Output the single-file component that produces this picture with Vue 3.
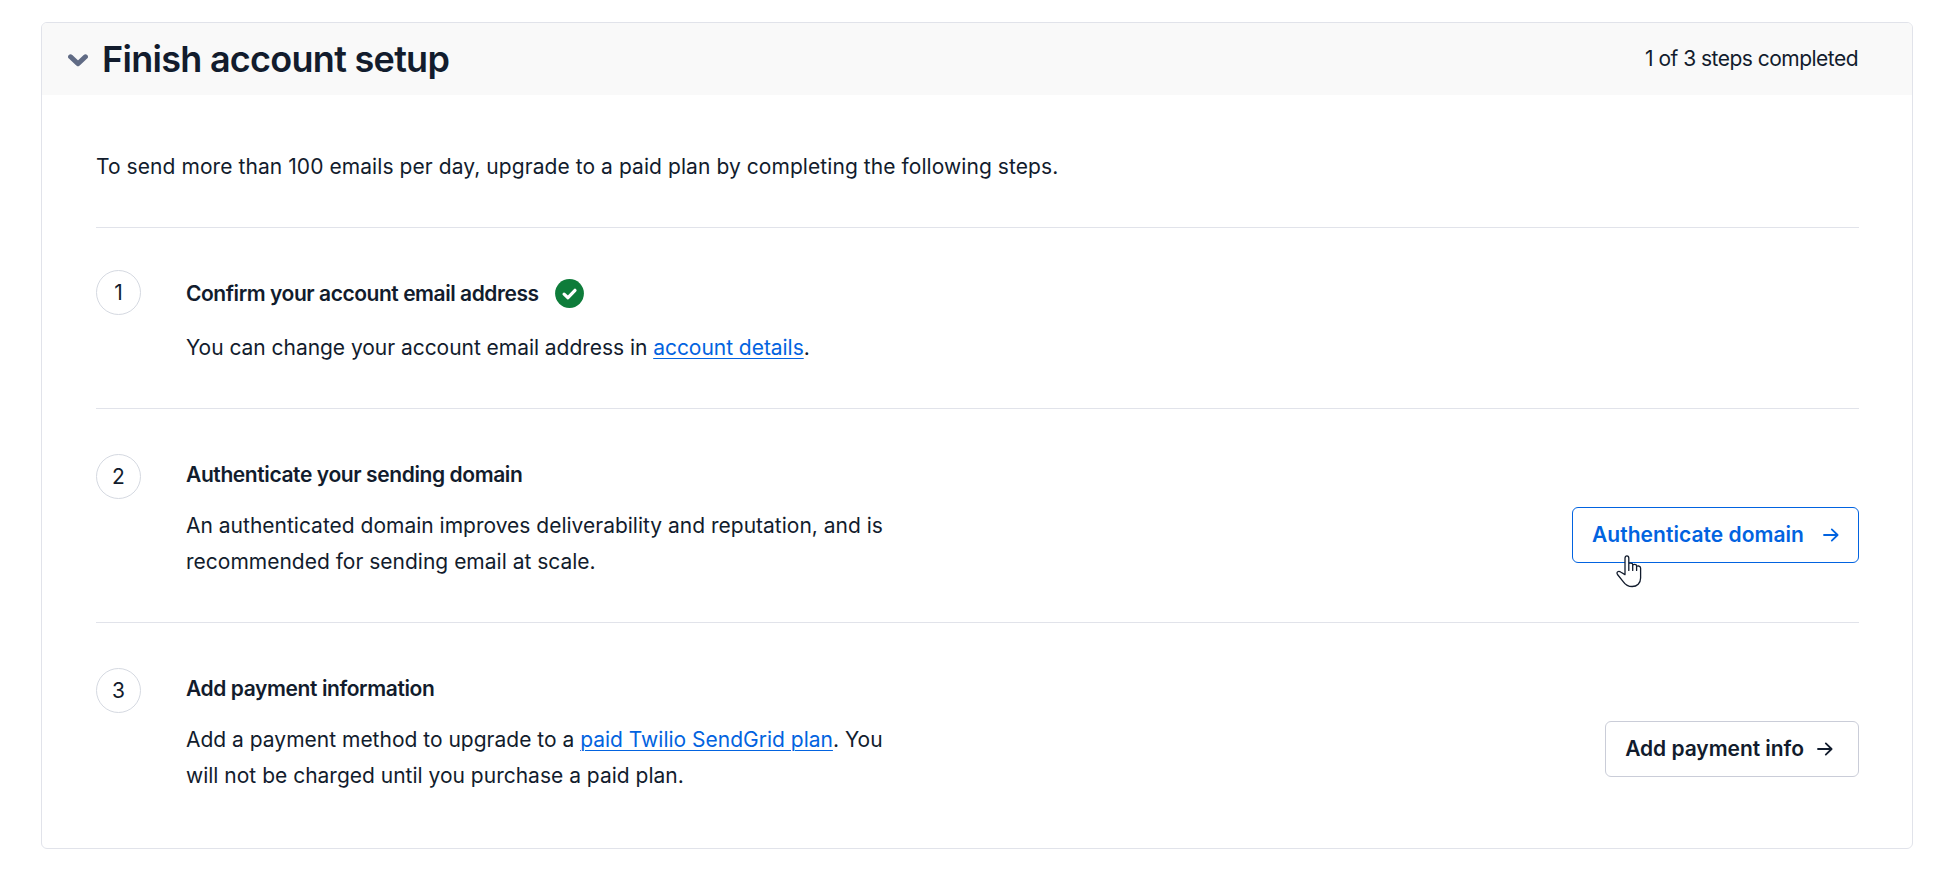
<template>
  <section class="setup-card">
    <header class="setup-card__header">
      <svg class="setup-card__chevron" viewBox="0 0 20 13" aria-hidden="true">
        <path d="M2.6 2.8 10 9.8l7.4-7" />
      </svg>
      <h1 class="setup-card__title">Finish account setup</h1>
      <span class="setup-card__progress">{{ completedCount }} of {{ steps.length }} steps completed</span>
    </header>

    <div class="setup-card__body">
      <p class="setup-card__intro">
        To send more than 100 emails per day, upgrade to a paid plan by completing the following steps.
      </p>

      <div
        v-for="(step, index) in steps"
        :key="step.title"
        class="step"
        :class="{ 'step--done': step.done }"
      >
        <span class="step__number">{{ index + 1 }}</span>

        <div class="step__content">
          <div class="step__heading">
            <h2 class="step__title">{{ step.title }}</h2>
            <svg v-if="step.done" class="step__check" viewBox="0 0 29 29" aria-hidden="true">
              <circle cx="14.5" cy="14.5" r="14.4" />
              <path d="M9.1 15.1 13 18.7l7-7.4" />
            </svg>
          </div>
          <p class="step__text">
            {{ step.before }}<a v-if="step.link" class="step__link" href="#" @click.prevent>{{ step.link }}</a>{{ step.after }}
          </p>
        </div>

        <button
          v-if="step.action"
          type="button"
          class="step__button"
          :class="{ 'step__button--primary': step.primary }"
        >
          {{ step.action }}
          <svg class="step__arrow" viewBox="0 0 16 14" aria-hidden="true">
            <path d="M1 7h13.4M8.8 1.4 14.6 7l-5.8 5.6" />
          </svg>
          <svg v-if="step.primary" class="step__cursor" viewBox="0 0 26 33" aria-hidden="true">
            <path
              d="M9 19.6V3.2C9 .2 12.8.2 12.8 3.2v12.2V8.9c0-1.2 3.9-1.2 3.9.6v5.9-5c0-1.4 3.9-1.4 3.9.5v4.5-3.6c0-1.4 4-1.2 4 1.3v9.8c0 5.3-3.6 8.6-8.4 8.6-4.5 0-6.6-1.5-8.8-4.7L1.5 19.5c-1.6-2.6 1-3.9 3.5-2.3z"
            />
          </svg>
        </button>
      </div>
    </div>
  </section>
</template>

<script setup>
import { computed, ref } from "vue";

const steps = ref([
  {
    title: "Confirm your account email address",
    before: "You can change your account email address in ",
    link: "account details",
    after: ".",
    done: true,
  },
  {
    title: "Authenticate your sending domain",
    before:
      "An authenticated domain improves deliverability and reputation, and is recommended for sending email at scale.",
    action: "Authenticate domain",
    primary: true,
  },
  {
    title: "Add payment information",
    before: "Add a payment method to upgrade to a ",
    link: "paid Twilio SendGrid plan",
    after: ". You will not be charged until you purchase a paid plan.",
    action: "Add payment info",
  },
]);

const completedCount = computed(() => steps.value.filter((step) => step.done).length);
</script>

<style>
body {
  background: #ffffff;
}
</style>

<style scoped>
.setup-card {
  box-sizing: border-box;
  width: 1872px;
  height: 827px;
  margin: 22px 0 0 41px;
  border: 1px solid #e1e3ea;
  border-radius: 6px;
  overflow: hidden;
  background: #ffffff;
  color: #121c2d;
  font-family: Inter, sans-serif;
  font-size: 21px;
  line-height: 36px;
}

.setup-card__header {
  display: flex;
  align-items: center;
  height: 72px;
  padding: 0 54px 0 26px;
  background: #f9f9f9;
}

.setup-card__chevron {
  width: 20px;
  height: 13px;
  margin-top: 2px;
  fill: none;
  stroke: #606b85;
  stroke-width: 5;
  stroke-linecap: round;
  stroke-linejoin: round;
}

.setup-card__title {
  margin: 0 0 0 14px;
  font-size: 36px;
  font-weight: 600;
  line-height: 48px;
  letter-spacing: -0.72px;
}

.setup-card__progress {
  margin-left: auto;
  letter-spacing: -0.52px;
}

.setup-card__body {
  padding: 54px 53px 0 54px;
}

.setup-card__intro {
  margin: 0 0 42px;
  letter-spacing: 0.07px;
}

.step {
  display: flex;
  align-items: flex-start;
  height: 168px;
  padding-top: 45px;
  border-top: 1px solid #e1e3ea;
}

.step--done {
  height: 138px;
  padding-top: 42px;
}

.step__number {
  box-sizing: border-box;
  width: 45px;
  height: 45px;
  border: 1px solid #d5d9e1;
  border-radius: 50%;
  line-height: 44px;
  text-align: center;
}

.step__content {
  width: 714px;
  margin: 6px 0 0 45px;
}

.step__heading {
  display: flex;
  align-items: center;
  min-height: 30px;
}

.step--done .step__heading {
  min-height: 36px;
}

.step__title {
  margin: 0;
  font-size: 21px;
  font-weight: 600;
  line-height: 30px;
  letter-spacing: -0.4px;
}

.step--done .step__title {
  letter-spacing: -0.45px;
}

.step__check {
  width: 29px;
  height: 29px;
  margin: 0 0 1px 16px;
  fill: #0e7c3a;
}

.step__check path {
  fill: none;
  stroke: #ffffff;
  stroke-width: 3.2;
  stroke-linecap: round;
  stroke-linejoin: round;
}

.step__text {
  margin: 18px 0 0;
}

.step--done .step__text {
  letter-spacing: -0.04px;
}

.step__link {
  color: #0263e0;
  text-decoration: underline;
  text-decoration-thickness: 1px;
  text-underline-offset: 3px;
}

.step__button {
  position: relative;
  display: flex;
  align-items: center;
  box-sizing: border-box;
  height: 56px;
  margin: 53px 0 0 auto;
  padding: 0 25px 0 19px;
  border: 1px solid #cacdd8;
  border-radius: 6px;
  background: #ffffff;
  color: #121c2d;
  font: inherit;
  font-weight: 600;
  letter-spacing: -0.04px;
}

.step__button--primary {
  padding: 0 19px;
  border-color: #0263e0;
  color: #0263e0;
  letter-spacing: 0.04px;
}

.step__arrow {
  width: 16px;
  height: 14px;
  margin-left: 13px;
  fill: none;
  stroke: currentColor;
  stroke-width: 1.8;
  stroke-linecap: round;
  stroke-linejoin: round;
}

.step__button--primary .step__arrow {
  margin-left: 19px;
}

/* hand pointer resting on the lower edge of the button */
.step__cursor {
  position: absolute;
  top: 47px;
  left: 43px;
  width: 26px;
  height: 33px;
  fill: #ffffff;
  stroke: #121c2d;
  stroke-width: 1.3;
  stroke-linejoin: round;
}
</style>
